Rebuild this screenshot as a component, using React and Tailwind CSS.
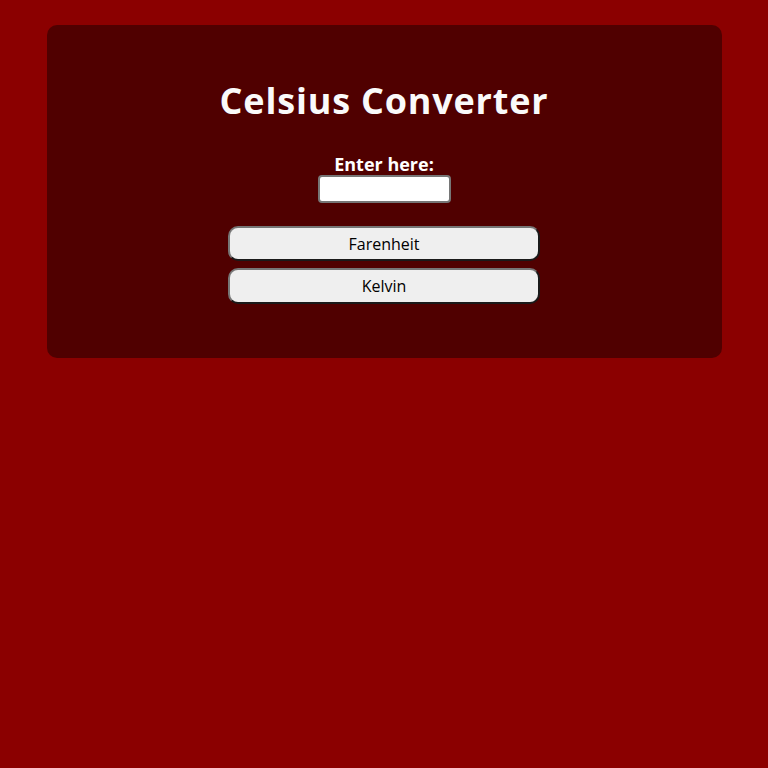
export default function App() {
    return (
        <div className="min-h-screen bg-[#8b0000] pt-[25px]" style={{ fontFamily: "'Open Sans', sans-serif" }}>
            <div className="mx-auto w-[675px] h-[333px] rounded-[10px] bg-[#500000] flex flex-col items-center pt-[54px]">
                <h1 className="text-[#fafafa] text-[36px] leading-[44px] font-bold tracking-[0.8px]">Celsius Converter</h1>
                <label className="mt-[30px] text-white text-[18px] leading-[22px] font-bold">Enter here:</label>
                <input
                    type="text"
                    className="w-[133px] h-[28px] bg-white rounded-[4px] border-2 border-[#767676] outline-none px-1"
                />
                <div className="mt-[23px] flex flex-col gap-[7px]">
                    <button className="w-[312px] h-[35px] rounded-[10px] bg-[#efefef] border-2 border-[#1a1a1a] border-t-[#767676] border-l-[#767676] text-black text-[16px]">
                        Farenheit
                    </button>
                    <button className="w-[312px] h-[36px] rounded-[10px] bg-[#efefef] border-2 border-[#1a1a1a] border-t-[#767676] border-l-[#767676] text-black text-[16px]">
                        Kelvin
                    </button>
                </div>
            </div>
        </div>
    );
}
